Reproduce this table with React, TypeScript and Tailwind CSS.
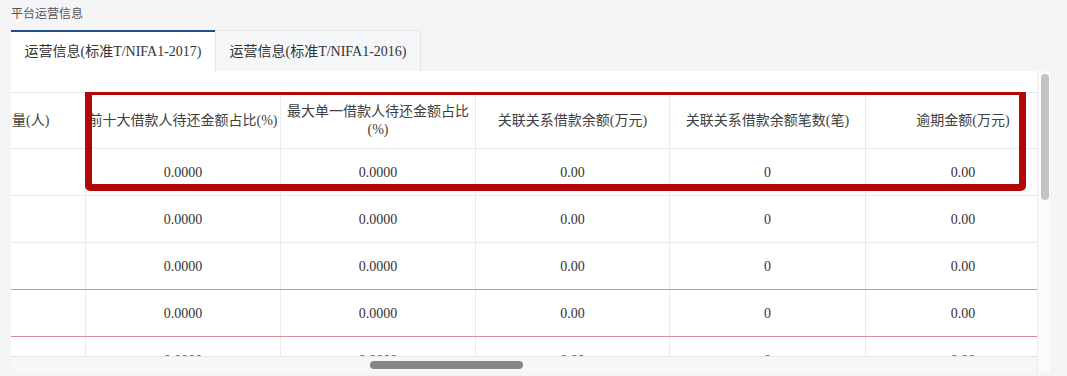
import React from "react";

const widths = [74, 195, 195, 194, 196, 195];

const headers: React.ReactNode[] = [
  "量(人)",
  "前十大借款人待还金额占比(%)",
  <>
    最大单一借款人待还金额占比
    <br />
    (%)
  </>,
  "关联关系借款余额(万元)",
  "关联关系借款余额笔数(笔)",
  "逾期金额(万元)",
];

const rowVals = ["", "0.0000", "0.0000", "0.00", "0", "0.00"];

function Cell({
  i,
  children,
  header,
}: {
  i: number;
  children?: React.ReactNode;
  header?: boolean;
}) {
  return (
    <div
      style={{ width: widths[i] }}
      className={
        "shrink-0 h-full flex items-center " +
        (i === 0 ? "justify-start pl-[1px] " : "justify-center border-l border-[#ebebef] ") +
        (header ? "text-[#404040] whitespace-nowrap text-center leading-[18px]" : "text-[#333]")
      }
    >
      {children}
    </div>
  );
}

export default function App() {
  const rows = [
    { border: "border-[#ebebef]" },
    { border: "border-[#ebebef]" },
    { border: "border-[#d88e99]" },
    { border: "border-[#d88e99]" },
    { border: "border-[#ebebef]" },
  ];
  return (
    <div
      className="w-[1067px] h-[376px] bg-[#f5f5f7] overflow-hidden text-[14px]"
      style={{ fontFamily: '"Liberation Serif", "Noto Sans CJK SC", serif' }}
    >
      <div
        className="h-[26px] flex items-center pl-[11px] text-[12px] text-[#555]"
        style={{ fontFamily: '"Noto Sans CJK SC", sans-serif' }}
      >
        平台运营信息
      </div>
      <div className="h-[4px]" />
      <div className="flex pl-[11px] h-[41px]">
        <div className="w-[204px] bg-white border-t-2 border-[#1f4e8a] flex items-center justify-center text-[#333]">
          运营信息(标准T/NIFA1-2017)
        </div>
        <div className="w-[206px] bg-[#f5f6f8] border-t border-l border-r border-[#e4e4e9] flex items-center justify-center text-[#333]">
          运营信息(标准T/NIFA1-2016)
        </div>
      </div>
      <div className="ml-[11px] w-[1039px] h-[301px] bg-white flex">
        <div className="w-[1026px] flex flex-col">
          <div className="h-[21px]" />
          <div className="relative h-[264px] overflow-hidden">
            <div className="w-[1049px]">
              <div className="h-[57px] flex border-t border-b border-[#ebebef]">
                {headers.map((h, i) => (
                  <Cell key={i} i={i} header>
                    {h}
                  </Cell>
                ))}
              </div>
              {rows.map((r, ri) => (
                <div key={ri} className={"h-[47px] flex border-b " + r.border}>
                  {rowVals.map((v, i) => (
                    <Cell key={i} i={i}>
                      {v}
                    </Cell>
                  ))}
                </div>
              ))}
            </div>
            <div className="absolute left-[74px] top-[-4px] w-[941px] h-[103px] border-[7px] border-[#b20608] rounded-[5px] pointer-events-none" />
          </div>
          <div className="h-[16px] bg-[#f7f7f9] border-t border-[#e6e6ea] pl-[359px] pt-[4px]">
            <div className="w-[153px] h-[8px] rounded-full bg-[#878787]" />
          </div>
        </div>
        <div className="w-[13px] border-l border-[#ececf0] bg-[#fbfbfc] pt-[3px] pl-[3px]">
          <div className="w-[8px] h-[126px] rounded-full bg-[#c4c4c6]" />
        </div>
      </div>
    </div>
  );
}
